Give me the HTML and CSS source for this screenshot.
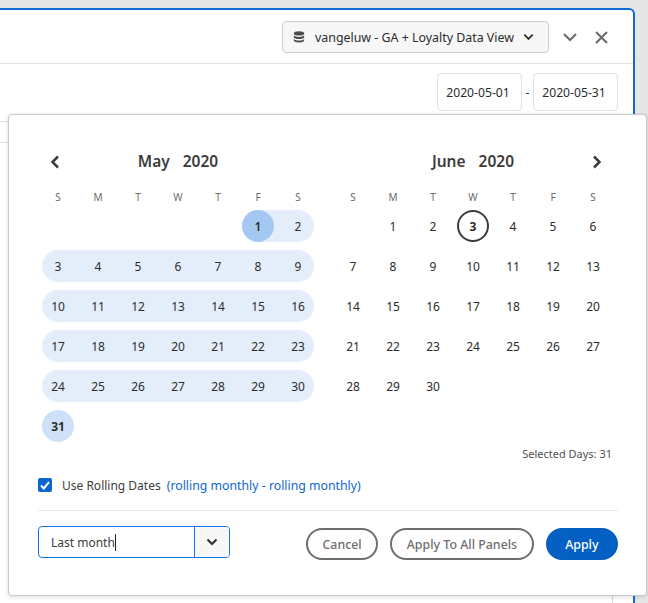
FILE: index.html
```html
<!DOCTYPE html>
<html>
<head>
<meta charset="utf-8"/>
<title>Date range</title>
<link rel="stylesheet" href="styles.css">
</head>
<body>
<div class="panel">
  <div class="panel-head">
    <div class="view-select">
      <svg class="db-icon" width="12" height="12" viewBox="0 0 14 14"><ellipse cx="7" cy="2.800" rx="6" ry="2.500" fill="#4b4b4b"/><path d="M1 5c1 1.300 3.400 2 6 2s5-.7 6-2v2.200C13 8.500 10.400 9.400 7 9.400S1 8.500 1 7.200z" fill="#4b4b4b"/><path d="M1 9.200c1 1.300 3.400 2 6 2s5-.7 6-2v2c0 1.300-2.600 2.300-6 2.300s-6-1-6-2.300z" fill="#4b4b4b"/></svg>
      <span class="view-name">vangeluw - GA + Loyalty Data View</span>
      <svg width="11" height="8" viewBox="0 0 12 8"><path d="M1.500 1.500 6 6l4.500-4.500" class="chev"/></svg>
    </div>
    <svg class="head-btn" width="14" height="9" viewBox="0 0 14 9"><path d="M1 1l6 6 6-6" class="chev grey"/></svg>
    <svg class="head-btn" width="13" height="13" viewBox="0 0 13 13"><path d="M1 1l11 11M12 1 1 12" class="chev grey"/></svg>
  </div>
  <div class="date-row">
    <div class="date-box">2020-05-01</div>
    <span class="dash">-</span>
    <div class="date-box">2020-05-31</div>
  </div>
  <div class="left-rule"></div>
  <div class="right-rule"></div>
</div>

<div class="popup">
  <div class="months">
    <div class="month">
      <div class="month-head">
        <svg width="10" height="14" viewBox="0 0 10 14"><path d="M8 1.500 2.500 7 8 12.500" class="arrow"/></svg>
        <div class="month-title"><span>May</span><span>2020</span></div>
      </div>
      <div class="grid">
        <div class="wd">S</div><div class="wd">M</div><div class="wd">T</div><div class="wd">W</div><div class="wd">T</div><div class="wd">F</div><div class="wd">S</div>
        <div></div><div></div><div></div><div></div><div></div>
        <div class="day range first"><span class="dot start">1</span></div><div class="day range last">2</div>
        <div class="day range first">3</div><div class="day range">4</div><div class="day range">5</div><div class="day range">6</div><div class="day range">7</div><div class="day range">8</div><div class="day range last">9</div>
        <div class="day range first">10</div><div class="day range">11</div><div class="day range">12</div><div class="day range">13</div><div class="day range">14</div><div class="day range">15</div><div class="day range last">16</div>
        <div class="day range first">17</div><div class="day range">18</div><div class="day range">19</div><div class="day range">20</div><div class="day range">21</div><div class="day range">22</div><div class="day range last">23</div>
        <div class="day range first">24</div><div class="day range">25</div><div class="day range">26</div><div class="day range">27</div><div class="day range">28</div><div class="day range">29</div><div class="day range last">30</div>
        <div class="day range first last end">31</div>
      </div>
    </div>
    <div class="month">
      <div class="month-head">
        <div class="month-title"><span>June</span><span>2020</span></div>
        <svg width="10" height="14" viewBox="0 0 10 14"><path d="M2 1.500 7.500 7 2 12.500" class="arrow"/></svg>
      </div>
      <div class="grid">
        <div class="wd">S</div><div class="wd">M</div><div class="wd">T</div><div class="wd">W</div><div class="wd">T</div><div class="wd">F</div><div class="wd">S</div>
        <div></div>
        <div class="day">1</div><div class="day">2</div><div class="day today">3</div><div class="day">4</div><div class="day">5</div><div class="day">6</div>
        <div class="day">7</div><div class="day">8</div><div class="day">9</div><div class="day">10</div><div class="day">11</div><div class="day">12</div><div class="day">13</div>
        <div class="day">14</div><div class="day">15</div><div class="day">16</div><div class="day">17</div><div class="day">18</div><div class="day">19</div><div class="day">20</div>
        <div class="day">21</div><div class="day">22</div><div class="day">23</div><div class="day">24</div><div class="day">25</div><div class="day">26</div><div class="day">27</div>
        <div class="day">28</div><div class="day">29</div><div class="day">30</div>
      </div>
    </div>
  </div>
  <div class="selected">Selected Days: 31</div>
  <div class="rolling">
    <span class="checkbox"><svg width="10" height="9" viewBox="0 0 10 9"><path d="M1 4.500 3.800 7.500 9 1.200" class="tick"/></svg></span>
    <span class="rolling-label">Use Rolling Dates</span>
    <span class="rolling-link">(rolling monthly - rolling monthly)</span>
  </div>
  <div class="foot">
    <div class="combo">
      <div class="combo-input"><span>Last month</span><i class="caret"></i></div>
      <div class="combo-btn"><svg width="12" height="8" viewBox="0 0 12 8"><path d="M1.500 1.500 6 6l4.500-4.500" class="chev"/></svg></div>
    </div>
    <div class="actions">
      <div class="btn">Cancel</div>
      <div class="btn">Apply To All Panels</div>
      <div class="btn primary">Apply</div>
    </div>
  </div>
</div>
</body>
</html>
```
FILE: styles.css
```css
html, body {
  margin: 0;
  height: 603px;
  overflow: hidden;
}

body {
  position: relative;
  background-color: #e6e6e6;
  font-family: "Noto Sans", "Open Sans", sans-serif;
  font-size: 12px;
  color: #2c2c2c;
  padding-top: 8px;
  box-sizing: border-box;
}

.panel {
  width: 635px;
  height: 595px;
  box-sizing: border-box;
  background-color: white;
  border-top: 2px solid #0e6bd6;
  border-right: 2px solid #0e6bd6;
  border-top-right-radius: 6px;
}

.panel-head {
  height: 54px;
  box-sizing: border-box;
  border-bottom: 1px solid #e1e1e1;
  display: flex;
  align-items: center;
  justify-content: flex-end;
  padding: 1px 25px 0 0;
}

.view-select {
  width: 267px;
  height: 32px;
  box-sizing: border-box;
  display: flex;
  align-items: center;
  padding: 0 14px 0 10px;
  margin-right: 14px;
  border: 1px solid #cfcfcf;
  border-radius: 4px;
  background-color: #f7f7f7;
}

.view-name {
  flex: 1;
  margin-left: 10px;
  font-size: 12.4px;
  white-space: nowrap;
}

.head-btn + .head-btn {
  margin-left: 18px;
}

.chev {
  fill: none;
  stroke: #2f2f2f;
  stroke-width: 2;
}

.chev.grey {
  stroke: #6a6a6a;
}

.date-row {
  display: flex;
  justify-content: flex-end;
  align-items: center;
  padding: 9px 15px 0 0;
}

.date-box {
  width: 85px;
  height: 38px;
  box-sizing: border-box;
  padding-right: 3px;
  border: 1px solid #e1e1e1;
  border-radius: 4px;
  font-size: 12.2px;
  display: flex;
  align-items: center;
  justify-content: center;
}

.dash {
  width: 11px;
  text-align: center;
}

.left-rule {
  height: 20px;
  width: 8px;
  margin-top: 10px;
  border-top: 1px solid #e1e1e1;
  border-bottom: 1px solid #e1e1e1;
}

.right-rule {
  width: 1px;
  height: 40px;
  margin: 430px 0 0 612px;
  background-color: #d5d5d5;
}

/* floats over the panel */
.popup {
  position: absolute;
  left: 8px;
  top: 114px;
  width: 639px;
  height: 482px;
  box-sizing: border-box;
  padding: 0 28px 0 29px;
  background-color: white;
  border: 1px solid #c9c9c9;
  border-radius: 4px;
  box-shadow: 0 1px 4px rgba(0, 0, 0, 0.15);
}

.months {
  display: flex;
  gap: 15px;
  padding-top: 31px;
}

.month {
  width: 280px;
}

.month-head {
  display: flex;
  align-items: center;
  height: 28px;
  position: relative;
}

.month-head svg {
  position: absolute;
  left: 12px;
  top: 9px;
}

.month-head .month-title + svg {
  left: auto;
  right: 11px;
}

.month-title {
  flex: 1;
  display: flex;
  justify-content: center;
  gap: 13px;
  padding-top: 1px;
  font-size: 15.5px;
  font-weight: 600;
  color: #3c3c3c;
}

.grid {
  display: grid;
  grid-template-columns: repeat(7, 40px);
  grid-template-rows: 28px;
  grid-auto-rows: 32px;
  row-gap: 8px;
}

.wd {
  font-size: 10px;
  line-height: 16px;
  text-align: center;
  color: #6a6a6a;
  align-self: end;
  margin-bottom: -3px;
}

.day {
  display: flex;
  align-items: center;
  justify-content: center;
}

.range {
  background-color: #e4eefb;
}

.first {
  margin-left: 4px;
  padding-right: 4px;
  border-top-left-radius: 16px;
  border-bottom-left-radius: 16px;
}

.last {
  margin-right: 4px;
  padding-left: 4px;
  border-top-right-radius: 16px;
  border-bottom-right-radius: 16px;
}

.first.last {
  padding: 0;
}

.dot {
  width: 32px;
  height: 32px;
  border-radius: 50%;
  display: flex;
  align-items: center;
  justify-content: center;
}

.start {
  background-color: #a5c8f3;
  font-weight: 600;
}

.end {
  background-color: #cfe1f9;
  font-weight: 700;
}

.today {
  width: 32px;
  justify-self: center;
  box-sizing: border-box;
  border: 2px solid #3c3c3c;
  border-radius: 50%;
  font-weight: 700;
}

.selected {
  text-align: right;
  padding-right: 6px;
  margin-top: 4px;
  font-size: 11px;
  line-height: 16px;
  color: #505050;
}

.rolling {
  display: flex;
  align-items: center;
  height: 16px;
  margin-top: 15px;
}

.checkbox {
  width: 14px;
  height: 14px;
  border-radius: 2px;
  background-color: #0d66d0;
  display: flex;
  align-items: center;
  justify-content: center;
}

.tick {
  fill: none;
  stroke: white;
  stroke-width: 2;
}

.rolling-label {
  margin-left: 10px;
  color: #3c3c3c;
}

.rolling-link {
  margin-left: 6px;
  font-size: 12.3px;
  color: #0d66d0;
}

.foot {
  margin-top: 17px;
  padding-top: 15px;
  border-top: 1px solid #ebebeb;
  display: flex;
  justify-content: space-between;
  align-items: flex-start;
}

.combo {
  display: flex;
  width: 192px;
  height: 32px;
  box-sizing: border-box;
  border: 1px solid #1473e6;
  border-radius: 4px;
}

.combo-input {
  flex: 1;
  display: flex;
  align-items: center;
  padding-left: 12px;
  color: #3c3c3c;
}

.caret {
  width: 1px;
  height: 17px;
  background-color: #222;
}

.combo-btn {
  width: 34px;
  border-left: 1px solid #1473e6;
  background-color: #f7f7f7;
  border-radius: 0 3px 3px 0;
  display: flex;
  align-items: center;
  justify-content: center;
}

.actions {
  display: flex;
  gap: 12px;
  margin-top: 2px;
}

.btn {
  height: 32px;
  box-sizing: border-box;
  padding: 0 14.500px;
  border: 2px solid #6e6e6e;
  border-radius: 16px;
  display: flex;
  align-items: center;
  font-size: 12.4px;
  font-weight: 500;
  color: #6e6e6e;
}

.btn.primary {
  padding: 0 17.500px;
  border-color: #0560c4;
  background-color: #0560c4;
  color: white;
}

.arrow {
  fill: none;
  stroke: #3c3c3c;
  stroke-width: 2.500;
}
```
